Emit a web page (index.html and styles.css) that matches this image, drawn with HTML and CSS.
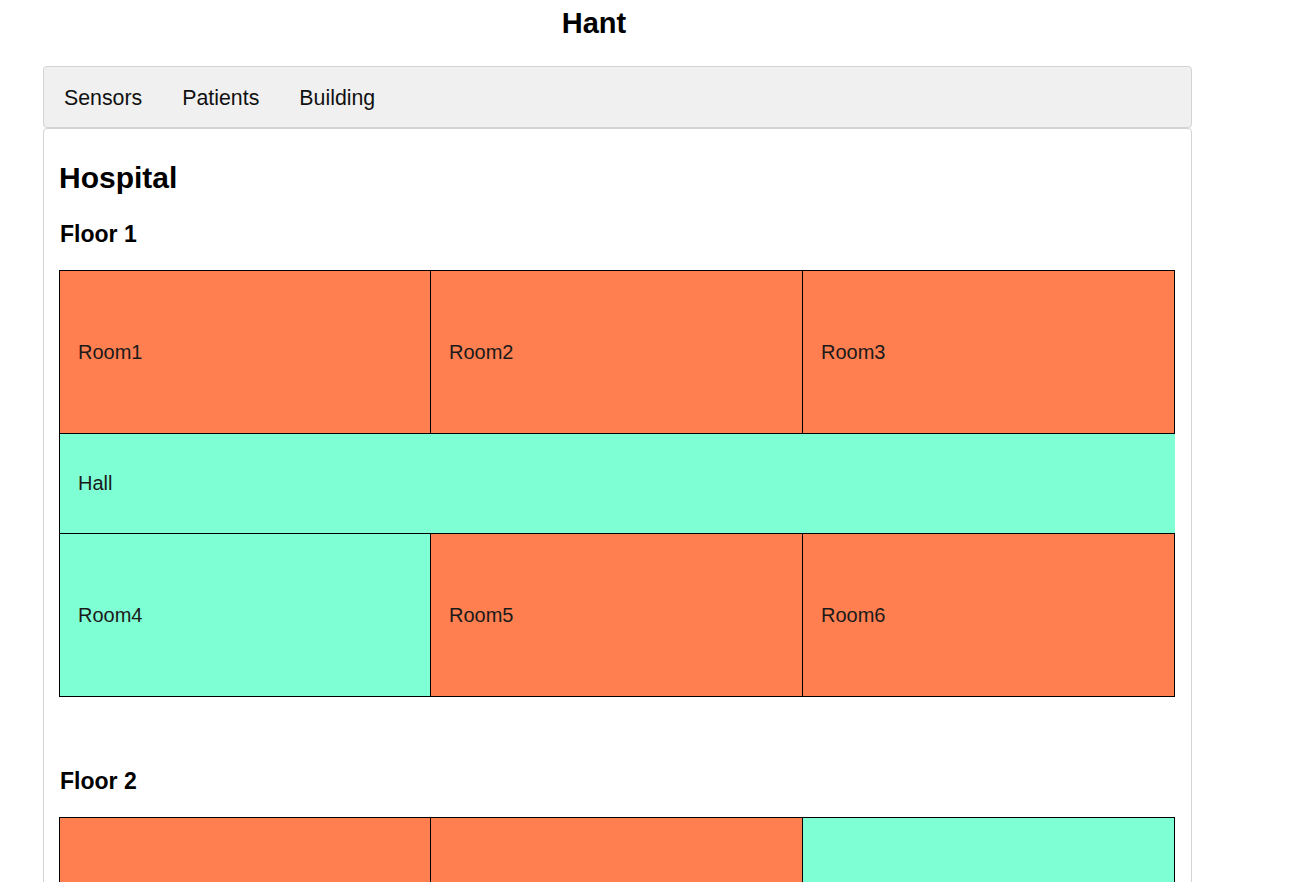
FILE: index.html
```html
<!DOCTYPE html>
<html lang="en">
<head>
<meta charset="utf-8">
<title>Hant</title>
<link rel="stylesheet" href="styles.css">
</head>
<body>
  <header class="app-header">
    <h1 class="app-title">Hant</h1>
  </header>
  <div class="app">
    <nav class="nav">
      <a class="nav-item">Sensors</a>
      <a class="nav-item">Patients</a>
      <a class="nav-item">Building</a>
    </nav>
    <main class="panel">
      <h2 class="building-title">Hospital</h2>

      <section class="floor">
        <h3 class="floor-title">Floor 1</h3>
        <div class="floor-plan">
          <div class="room-row">
            <div class="room occupied">Room1</div>
            <div class="room occupied">Room2</div>
            <div class="room occupied">Room3</div>
          </div>
          <div class="hall free">Hall</div>
          <div class="room-row">
            <div class="room free">Room4</div>
            <div class="room occupied">Room5</div>
            <div class="room occupied">Room6</div>
          </div>
        </div>
      </section>

      <section class="floor">
        <h3 class="floor-title">Floor 2</h3>
        <div class="floor-plan">
          <div class="room-row">
            <div class="room occupied">Room7</div>
            <div class="room occupied">Room8</div>
            <div class="room free">Room9</div>
          </div>
          <div class="hall free">Hall</div>
          <div class="room-row">
            <div class="room free">Room10</div>
            <div class="room free">Room11</div>
            <div class="room occupied">Room12</div>
          </div>
        </div>
      </section>
    </main>
  </div>
</body>
</html>
```

FILE: styles.css
```css
html, body {
  margin: 0;
  padding: 0;
  background: #ffffff;
}

body {
  font-family: "Liberation Sans", Arial, sans-serif;
  color: #111111;
}

.app-header {
  width: 1172px;
  margin: 0 8px;
  padding-top: 6px;
}

.app-title {
  margin: 0;
  text-align: center;
  font-size: 29px;
  line-height: 34px;
  font-weight: bold;
  color: #000000;
}

.app {
  width: 1149px;
  margin: 26px 0 0 43px;
}

.nav {
  display: flex;
  align-items: center;
  box-sizing: content-box;
  height: 58px;
  padding-top: 2px;
  background: #f0f0f0;
  border: 1px solid #d3d3d3;
  border-radius: 4px;
}

.nav-item {
  padding: 0 20px;
  font-size: 21.33px;
  line-height: 24px;
  color: #111111;
  cursor: pointer;
}

.panel {
  border: 1px solid #d3d3d3;
  border-radius: 4px;
  padding: 32px 16px 60px 15px;
  background: #ffffff;
}

.building-title {
  margin: 0;
  font-size: 30px;
  line-height: 34px;
  font-weight: bold;
  color: #000000;
}

.floor-title {
  margin: 26px 0 23px 1px;
  font-size: 23px;
  line-height: 26px;
  font-weight: bold;
  color: #000000;
}

.floor-plan {
  width: 1115px;
  border-left: 1px solid #000000;
  margin-bottom: 71px;
}

.room-row {
  display: grid;
  grid-template-columns: 371px 372px 372px;
  border-top: 1px solid #000000;
  border-bottom: 1px solid #000000;
}

.room {
  display: flex;
  align-items: center;
  height: 162px;
  padding-left: 18px;
  border-right: 1px solid #000000;
  font-size: 20px;
  line-height: 23px;
  color: #1a1a1a;
}

.hall {
  display: flex;
  align-items: center;
  height: 99px;
  padding-left: 18px;
  font-size: 20px;
  line-height: 23px;
  color: #1a1a1a;
}

.hall + .room-row {
  border-top: 1px solid #000000;
}

.occupied {
  background: #ff7f50;
}

.free {
  background: #7fffd4;
}
```
